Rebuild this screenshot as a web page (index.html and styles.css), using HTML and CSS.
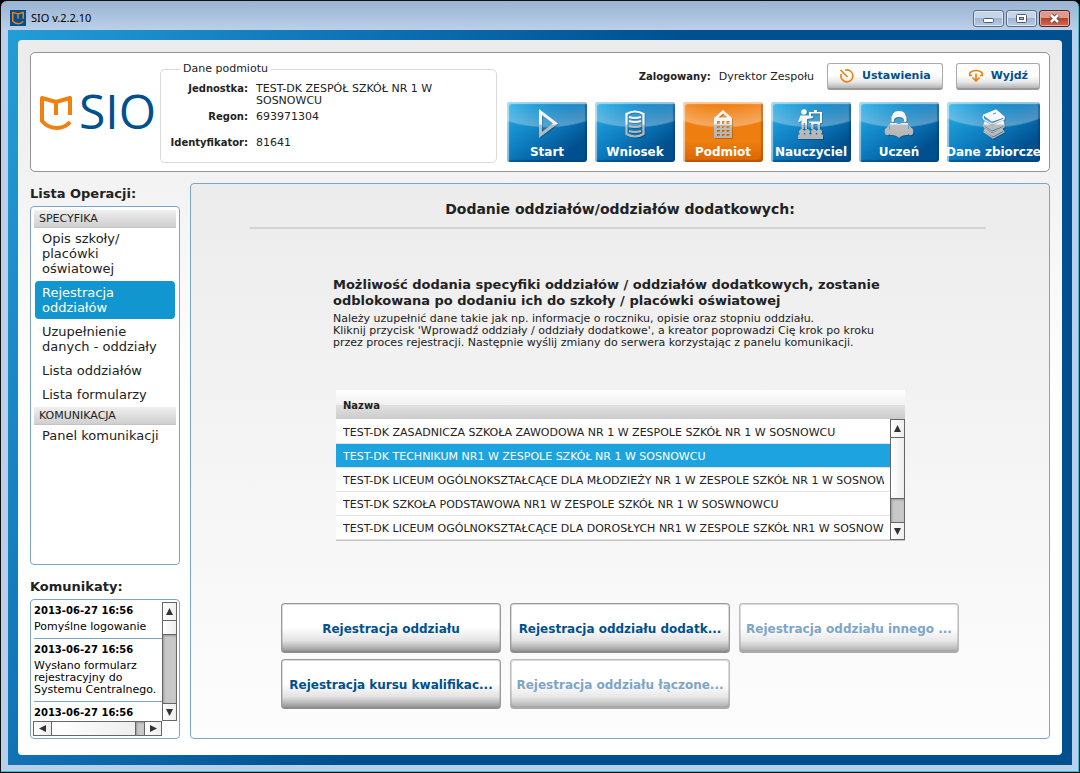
FILE: index.html
```html
<!DOCTYPE html>
<html lang="pl">
<head>
<meta charset="utf-8">
<title>SIO v.2.2.10</title>
<link rel="stylesheet" href="styles.css">
</head>
<body>
<svg class="defs" aria-hidden="true">
  <defs>
    <linearGradient id="metal" gradientUnits="userSpaceOnUse" x1="0" y1="0" x2="0" y2="32">
      <stop offset="0" stop-color="#fff"/><stop offset=".5" stop-color="#f2f2f2"/><stop offset=".54" stop-color="#bdbdbd"/><stop offset="1" stop-color="#b4b4b4"/>
    </linearGradient>
    <symbol id="mark" viewBox="0 0 32 36">
      <path d="M2 27V3L16 7L30 3V20M16 7V20M2 26Q8 33 17 33Q25 33 30 27" fill="none" stroke="#f08010" stroke-width="4" stroke-linejoin="round" stroke-linecap="butt"/>
    </symbol>
  </defs>
</svg>
<div class="window">
  <header class="titlebar">
    <span class="app-icon"><svg viewBox="0 0 32 36"><use href="#mark"/></svg></span>
    <h1 class="app-title">SIO v.2.2.10</h1>
    <div class="win-buttons">
      <button class="win-btn" type="button" aria-label="Minimalizuj"><svg viewBox="0 0 29 15"><rect x="9.5" y="7.500" width="10" height="4" rx="1" fill="#fff" stroke="#555b6e"/></svg></button>
      <button class="win-btn" type="button" aria-label="Maksymalizuj"><svg viewBox="0 0 29 15"><rect x="9.500" y="3.500" width="10" height="8" rx="1" fill="#fff" stroke="#555b6e"/><rect x="12.500" y="6.500" width="4" height="2" fill="#9fb6d4" stroke="#555b6e"/></svg></button>
      <button class="win-btn win-close" type="button" aria-label="Zamknij"><svg viewBox="0 0 29 15"><path d="M11 4L18 11M18 4L11 11" stroke="#5b4450" stroke-width="4.500"/><path d="M11 4L18 11M18 4L11 11" stroke="#fff" stroke-width="2.600"/></svg></button>
    </div>
  </header>
  <div class="frame">
    <div class="page">
      <section class="top">
        <div class="logo"><svg class="logo-mark" viewBox="0 0 32 36"><use href="#mark"/></svg><span class="logo-text">SIO</span></div>
        <fieldset class="entity">
          <legend>Dane podmiotu</legend>
          <dl class="entity-data">
            <dt>Jednostka:</dt><dd>TEST-DK ZESPÓŁ SZKÓŁ NR 1 W SOSNOWCU</dd>
            <dt>Regon:</dt><dd class="regon">693971304</dd>
            <dt>Identyfikator:</dt><dd>81641</dd>
          </dl>
        </fieldset>
        <div class="actions">
          <div class="user-row">
            <p class="user"><b>Zalogowany:</b><span>Dyrektor Zespołu</span></p>
            <button class="tool settings" type="button"><svg viewBox="0 0 16 16"><path d="M6 2.200A6 6 0 1 1 2.200 6M1.500 2L8.500 9" fill="none" stroke="#f08010" stroke-width="1.700"/></svg>Ustawienia</button>
            <button class="tool" type="button"><svg viewBox="0 0 16 16"><path d="M4 7.500H1.800V5Q4 2.500 8 2.500Q12 2.500 14.200 5V7.500H12M8 5.500V13M4.500 9.500L8 13L11.500 9.500" fill="none" stroke="#f08010" stroke-width="1.700"/></svg>Wyjdź</button>
          </div>
          <nav class="nav">
            <a href="#start" class="tile"><svg viewBox="0 0 32 32"><path d="M9.500 4V27L24.500 15.500Z" fill="none" stroke="url(#metal)" stroke-width="3"/></svg><span>Start</span></a>
            <a href="#wniosek" class="tile"><svg viewBox="0 0 32 32"><path d="M7.500 6Q16 1 24.500 6V26Q16 31 7.500 26ZM10 9Q16 11 22 9M10 13Q16 15 22 13M10 18Q16 20 22 18M10 23Q16 25 22 23" fill="none" stroke="url(#metal)" stroke-width="2.200"/></svg><span>Wniosek</span></a>
            <a href="#podmiot" class="tile active"><svg viewBox="0 0 32 32"><path d="M7 10L16 2L25 10V30H7ZM11.500 9.500H20.500L16 5.500ZM10 13V16H13V13ZM15 13V16H17.500V13ZM19.500 13V16H22.500V13ZM10 18V20H13V18ZM15 18V20H17.500V18ZM19.500 18V20H22.500V18ZM10 22V24H13V22ZM15 22V24H17.500V22ZM19.500 22V24H22.500V22ZM10 26V28H13V26ZM15 26V28H17.500V26ZM19.500 26V28H22.500V26Z" fill="url(#metal)" fill-rule="evenodd"/></svg><span>Podmiot</span></a>
            <a href="#nauczyciel" class="tile"><svg viewBox="0 0 32 32"><g fill="url(#metal)"><circle cx="9" cy="4" r="2.800"/><path d="M5.500 7.500H13L18 8.500V10L12 11V21H9.800V15H8.800V21H6.500V12L5 14H3Z"/><path d="M14 4H19V2H22V4H27V15H25V21H22.500V16H18.500V21H16V15H14V13.500H25V5.500H16V8H14Z"/><path d="M3 31V27L5 26A2.700 2.700 0 1 1 8.500 26L9.500 26.500L10.500 26A2.700 2.700 0 1 1 14 26L15.500 26.500L17 26A2.700 2.700 0 1 1 20.500 26L21.500 26.500L22.500 26A2.700 2.700 0 1 1 26 26L28 27V31Z"/></g></svg><span>Nauczyciel</span></a>
            <a href="#uczen" class="tile"><svg viewBox="0 0 32 32"><g fill="url(#metal)"><path d="M9 12Q8 3 16 3Q24 3 23 12L21.500 13Q21 9 16 9Q11 9 10.500 13Z"/><rect x="8.500" y="8" width="2.500" height="6" rx="1"/><rect x="21" y="8" width="2.500" height="6" rx="1"/><path d="M7 15H13Q16 17 19 15H25V27Q19 26.500 16 30Q13 26.500 7 27Z"/><ellipse cx="4.500" cy="23.500" rx="2.800" ry="3.800"/><ellipse cx="27.500" cy="23.500" rx="2.800" ry="3.800"/><path d="M6.500 16L3 21H6.500ZM25.500 16L29 21H25.500Z"/></g></svg><span>Uczeń</span></a>
            <a href="#dane" class="tile"><svg viewBox="0 0 32 32"><g fill="none" stroke="url(#metal)" stroke-width="1.300"><path d="M6 7L18 2L26 9L14 13Z" fill="url(#metal)"/><path d="M6 7Q4 10 7 12L14 16L26 11V9"/><path d="M7 14L14 18L25 13L26 17L14 22L6 17Z" fill="url(#metal)"/><path d="M6 17V19L14 24L26 19V17"/><path d="M7 21L14 26L24 21L26 24L15 30L6 24Z"/><path d="M8 22L14 26L24 21V23L15 28L7 24Z" fill="url(#metal)"/><path d="M15 6L18 5" stroke="#4aa3d8"/></g></svg><span>Dane zbiorcze</span></a>
          </nav>
        </div>
      </section>
      <div class="columns">
        <aside class="side">
          <h2 class="side-title">Lista Operacji:</h2>
          <nav class="ops">
            <h3>SPECYFIKA</h3>
            <a href="#opis">Opis szkoły/ placówki oświatowej</a>
            <a href="#rejestracja" class="active">Rejestracja oddziałów</a>
            <a href="#uzupelnienie">Uzupełnienie danych - oddziały</a>
            <a href="#lista">Lista oddziałów</a>
            <a href="#formularze">Lista formularzy</a>
            <h3>KOMUNIKACJA</h3>
            <a href="#panel">Panel komunikacji</a>
          </nav>
          <h2 class="side-title">Komunikaty:</h2>
          <div class="messages">
            <div class="message-view">
              <article><b>2013-06-27 16:56</b><p>Pomyślne logowanie</p></article>
              <article><b>2013-06-27 16:56</b><p>Wysłano formularz rejestracyjny do<br>Systemu Centralnego.</p></article>
              <article><b>2013-06-27 16:56</b></article>
            </div>
            <div class="bar bar-v messages-v">
              <button type="button" aria-label="W górę"><svg viewBox="0 0 9 9"><path d="M4.500 1L8 8H1Z"/></svg></button>
              <span class="thumb"></span><span class="track"></span>
              <button type="button" aria-label="W dół"><svg viewBox="0 0 9 9"><path d="M4.500 8L8 1H1Z"/></svg></button>
            </div>
            <div class="bar bar-h">
              <button type="button" aria-label="W lewo"><svg viewBox="0 0 9 9"><path d="M1 4.500L8 1V8Z"/></svg></button>
              <span class="thumb"></span><span class="track"></span>
              <button type="button" aria-label="W prawo"><svg viewBox="0 0 9 9"><path d="M8 4.500L1 1V8Z"/></svg></button>
            </div>
          </div>
        </aside>
        <main class="content">
          <h2 class="content-title">Dodanie oddziałów/oddziałów dodatkowych:</h2>
          <div class="intro">
            <h3>Możliwość dodania specyfiki oddziałów / oddziałów dodatkowych, zostanie<br>odblokowana po dodaniu ich do szkoły / placówki oświatowej</h3>
            <p>Należy uzupełnić dane takie jak np. informacje o roczniku, opisie oraz stopniu oddziału.<br>Kliknij przycisk 'Wprowadź oddziały / oddziały dodatkowe', a kreator poprowadzi Cię krok po kroku<br>przez proces rejestracji. Następnie wyślij zmiany do serwera korzystając z panelu komunikacji.</p>
          </div>
          <div class="grid">
            <div class="grid-main">
              <table class="units">
                <thead><tr><th scope="col">Nazwa</th></tr></thead>
                <tbody>
                  <tr><td><div>TEST-DK ZASADNICZA SZKOŁA ZAWODOWA NR 1 W ZESPOLE SZKÓŁ NR 1 W SOSNOWCU</div></td></tr>
                  <tr class="selected"><td><div>TEST-DK TECHNIKUM NR1 W ZESPOLE SZKÓŁ NR 1 W SOSNOWCU</div></td></tr>
                  <tr><td><div>TEST-DK LICEUM OGÓLNOKSZTAŁCĄCE DLA MŁODZIEŻY NR 1 W ZESPOLE SZKÓŁ NR 1 W SOSNOWCU</div></td></tr>
                  <tr><td><div>TEST-DK SZKOŁA PODSTAWOWA NR1 W ZESPOLE SZKÓŁ NR 1 W SOSWNOWCU</div></td></tr>
                  <tr><td><div>TEST-DK LICEUM OGÓLNOKSZTAŁCĄCE DLA DOROSŁYCH NR1 W ZESPOLE SZKÓŁ NR1 W SOSNOWCU</div></td></tr>
                </tbody>
              </table>
            </div>
            <div class="grid-side">
              <div class="bar bar-v">
                <button type="button" aria-label="W górę"><svg viewBox="0 0 9 9"><path d="M4.500 1L8 8H1Z"/></svg></button>
                <span class="thumb"></span><span class="track"></span>
                <button type="button" aria-label="W dół"><svg viewBox="0 0 9 9"><path d="M4.500 8L8 1H1Z"/></svg></button>
              </div>
            </div>
          </div>
          <div class="commands">
            <button type="button">Rejestracja oddziału</button>
            <button type="button">Rejestracja oddziału dodatk...</button>
            <button type="button" disabled>Rejestracja oddziału innego ...</button>
            <button type="button">Rejestracja kursu kwalifikac...</button>
            <button type="button" disabled>Rejestracja oddziału łączone...</button>
          </div>
        </main>
      </div>
    </div>
  </div>
</div>
</body>
</html>
```
FILE: styles.css
```css
* { box-sizing: border-box; }
body { margin: 0; background: #000; color: #222; font: 11px/12px Verdana, "DejaVu Sans", sans-serif; }
h1, h2, h3, p, dl, dd { margin: 0; }
button { font: inherit; margin: 0; padding: 0; cursor: pointer; }
a { color: inherit; text-decoration: none; }
svg { display: block; }
.defs { position: absolute; width: 0; height: 0; }

.window { min-height: 100vh; display: flex; flex-direction: column; padding: 0 7px 7px; background: linear-gradient(#99b4d1, #bcd0ea 30px, #b9cfea); border: 1px solid #111; border-radius: 7px 7px 0 0; box-shadow: inset -1px -1px #2fc4dd; }
.titlebar { height: 29px; display: flex; align-items: center; gap: 5px; padding: 5px 2px 0; }
.app-icon { width: 16px; height: 16px; background: #00508f; padding: 1px 2px; }
.app-icon svg { width: 12px; height: 14px; }
.app-title { flex: 1; font: 11px/16px "Noto Sans", Tahoma, sans-serif; color: #000; }
.win-buttons { display: flex; gap: 2px; align-self: flex-start; margin-top: 4px; }
.win-btn { width: 31px; height: 17px; border: 1px solid #5c6b86; border-radius: 3px; background: linear-gradient(#c6d6ea 48%, #9fb6d4 50%, #b9cce4); box-shadow: inset 0 0 0 1px #dce7f4; }
.win-btn svg { width: 29px; height: 15px; }
.win-close { background: linear-gradient(#dc9a8c 45%, #bc4029 50%, #cf6a4e); border-color: #5a1f22; box-shadow: inset 0 0 0 1px #e6aca0; }

.frame { flex: 1; display: flex; padding: 10px; background: linear-gradient(115deg, #249dd6, #0f70b2 26%, #00508f 48%); }
.page { flex: 1; min-width: 0; display: flex; flex-direction: column; gap: 11px; padding: 12px 12px 16px; border-radius: 4px; background: linear-gradient(#ebebeb, #fff 360px); }

.top { display: flex; min-height: 120px; padding: 9px 9px 8px; background: #fff; border: 1px solid #949494; border-radius: 5px; }
.logo { display: flex; align-items: center; gap: 7px; width: 120px; }
.logo-mark { width: 32px; height: 36px; }
.logo-text { font: 48px/48px "Open Sans", "Noto Sans", sans-serif; color: #00508f; padding-bottom: 3px; }
.entity { width: 337px; height: 101px; min-width: 0; margin: 0; padding: 7px 5px 0; border: 1px solid #d9d9d9; border-radius: 5px; }
.entity legend { margin-left: 14px; padding: 0 3px; line-height: 14px; }
.entity-data { display: grid; grid-template-columns: 82px 1fr; column-gap: 8px; row-gap: 4px; margin-right: 32px; }
.entity-data dt { font-size: 10px; font-weight: bold; text-align: right; }
.regon { padding-bottom: 10px; }
.actions { flex: 1; display: flex; flex-direction: column; align-items: flex-end; gap: 12px; }
.user-row { display: flex; align-items: center; gap: 13px; padding-top: 1px; }
.user { display: flex; gap: 8px; }
.user b { font-size: 10px; }
.tool { display: flex; align-items: center; justify-content: center; gap: 7px; height: 27px; padding: 0 11px; border: 1px solid #aaa; border-bottom: 2px solid #999; border-radius: 3px; background: linear-gradient(#fff 45%, #e8e8e8 75%, #b4b4b4); color: #00508f; font-weight: bold; }
.tool svg { width: 16px; height: 16px; }
.nav { display: flex; gap: 8px; }
.tile { width: 80px; height: 60px; display: flex; flex-direction: column; align-items: center; padding-top: 6px; border-radius: 3px; color: #fff; font-size: 12px; line-height: 14px; font-weight: bold; white-space: nowrap; background: radial-gradient(ellipse 90px 60px at 50% -34px, rgba(255,255,255,0) 57%, rgba(255,255,255,.3) 97%, rgba(255,255,255,0) 100%), linear-gradient(145deg, #29b0e8, #0b78bb 50%, #00508f 80%); box-shadow: inset 2px 2px 1px rgba(255,255,255,.55), inset -2px -2px 1px rgba(0,50,110,.4); }
.tile:last-child { width: 93px; }
.tile.active { background: radial-gradient(ellipse 90px 60px at 50% -34px, rgba(255,255,255,0) 57%, rgba(255,255,255,.34) 97%, rgba(255,255,255,0) 100%), linear-gradient(#f07c0c, #ee7f10 65%, #d96405); box-shadow: inset 2px 2px 1px rgba(255,255,255,.6), inset -2px -2px 1px rgba(150,60,0,.4); }
.tile svg { width: 32px; height: 32px; margin-bottom: 5px; filter: drop-shadow(1px 1px 0 rgba(0,0,0,.2)); }

.columns { flex: 1; display: flex; gap: 10px; }
.side { width: 150px; display: flex; flex-direction: column; }
.side-title { font-size: 13px; line-height: 21px; margin-bottom: 2px; }
.ops { flex: 1; margin-bottom: 11px; padding: 3px; background: #fff; border: 1px solid #7aa5ca; border-radius: 4px; font-size: 13px; line-height: 15px; }
.ops h3 { padding: 2px 5px; font-size: 11px; line-height: 13px; font-weight: normal; background: linear-gradient(#efefef, #cfcfcf); border-bottom: 1px solid #c4c4c4; }
.ops a { display: block; margin: 1px; padding: 4px 7px; border-radius: 4px; }
.ops h3 + a { margin-top: 0; padding-top: 3px; }
.ops a.active { background: #1296d0; color: #fff; }
.messages { height: 140px; display: grid; grid-template-columns: 1fr 15px; grid-template-rows: 1fr 15px; padding: 2px; background: #fff; border: 1px solid #7aa5ca; border-radius: 4px; color: #000; }
.messages > * { min-width: 0; }
.message-view { overflow: hidden; padding-left: 1px; }
.message-view article { padding: 2px 0 5px; border-bottom: 1px solid #7aa5ca; }
.message-view article + article { padding-top: 4px; }
.message-view b { display: block; font-size: 10px; line-height: 14px; margin-bottom: 3px; }
.message-view article:last-child { border: 0; }

.bar { display: flex; border: 1px solid #666; background: #c8c8c8; }
.bar-v { flex-direction: column; }
.bar button { flex: none; border: 0; background: linear-gradient(90deg, #fff, #eee); display: flex; align-items: center; justify-content: center; }
.bar button svg { width: 9px; height: 9px; fill: #333; }
.bar .thumb { background: linear-gradient(90deg, #fff, #eee); }
.bar .track { flex: 1; box-shadow: inset 1px 1px 2px #999; }
.bar-v button { height: 17px; }
.bar-h button { width: 17px; }
.bar-v .thumb { height: 62px; border: 1px solid #666; border-width: 1px 0; }
.bar-v button:last-child { border-top: 1px solid #666; }
.bar-h .thumb { flex: none; width: 85px; border: 1px solid #666; border-width: 0 1px; }
.bar-h button:last-child { border-left: 1px solid #666; }
.bar.messages-v .thumb { height: 15px; }

.content { flex: 1; min-width: 0; display: flex; flex-direction: column; padding: 15px 63px 28px 59px; border: 1px solid #7aa5ca; border-radius: 4px; background: linear-gradient(#ececec, #fdfdfd); }
.content-title { padding: 0 0 8px 4px; border-bottom: 2px solid #d4d4d4; text-align: center; font-size: 14px; line-height: 20px; margin-bottom: 48px; }
.intro { margin-left: 83px; white-space: nowrap; }
.intro h3 { font-size: 13px; line-height: 16px; margin-bottom: 4px; }
.grid { display: flex; width: 569px; max-width: 100%; margin: 41px 0 0 86px; border-bottom: 1px solid #c4c4c4; }
.grid-main { flex: 1; min-width: 0; }
.units { width: 100%; table-layout: fixed; border-collapse: separate; border-spacing: 0; }
.units th { height: 30px; padding: 2px 7px 0; text-align: left; font-size: 10px; background: linear-gradient(#fff, #f1f1f1 15px, #e2e2e2 15px, #cbcbcb 29px, #fff 29px); }
.units td { height: 24px; padding: 2px 6px 0 7px; background: #fff; border-bottom: 1px solid #e2e2e2; }
.units td div { overflow: hidden; white-space: nowrap; line-height: 16px; }
.units .selected td { background: #1da4e0; color: #fff; }
.grid-side { width: 15px; display: flex; flex-direction: column; padding-top: 29px; background: linear-gradient(#fff, #f1f1f1 15px, #e2e2e2 15px, #cbcbcb 29px); }
.grid-side .bar { flex: 1; }
.commands { display: grid; grid-template-columns: repeat(3, 220px); gap: 6px 9px; margin: 62px 0 0 31px; }
.commands button { height: 50px; padding-top: 2px; border: 1px solid #999; border-bottom: 2px solid #8c8c8c; border-radius: 4px; background: linear-gradient(#fff 50%, #e3e3e3 78%, #999); box-shadow: inset 0 0 0 1px rgba(150,150,150,.35); color: #00508f; font-size: 12px; font-weight: bold; white-space: nowrap; }
.commands button:disabled { border-color: #bbb; border-bottom-color: #aaa; background: linear-gradient(#fff 50%, #e8e8e8 78%, #b0b0b0); color: #7da5c9; cursor: default; }
```
